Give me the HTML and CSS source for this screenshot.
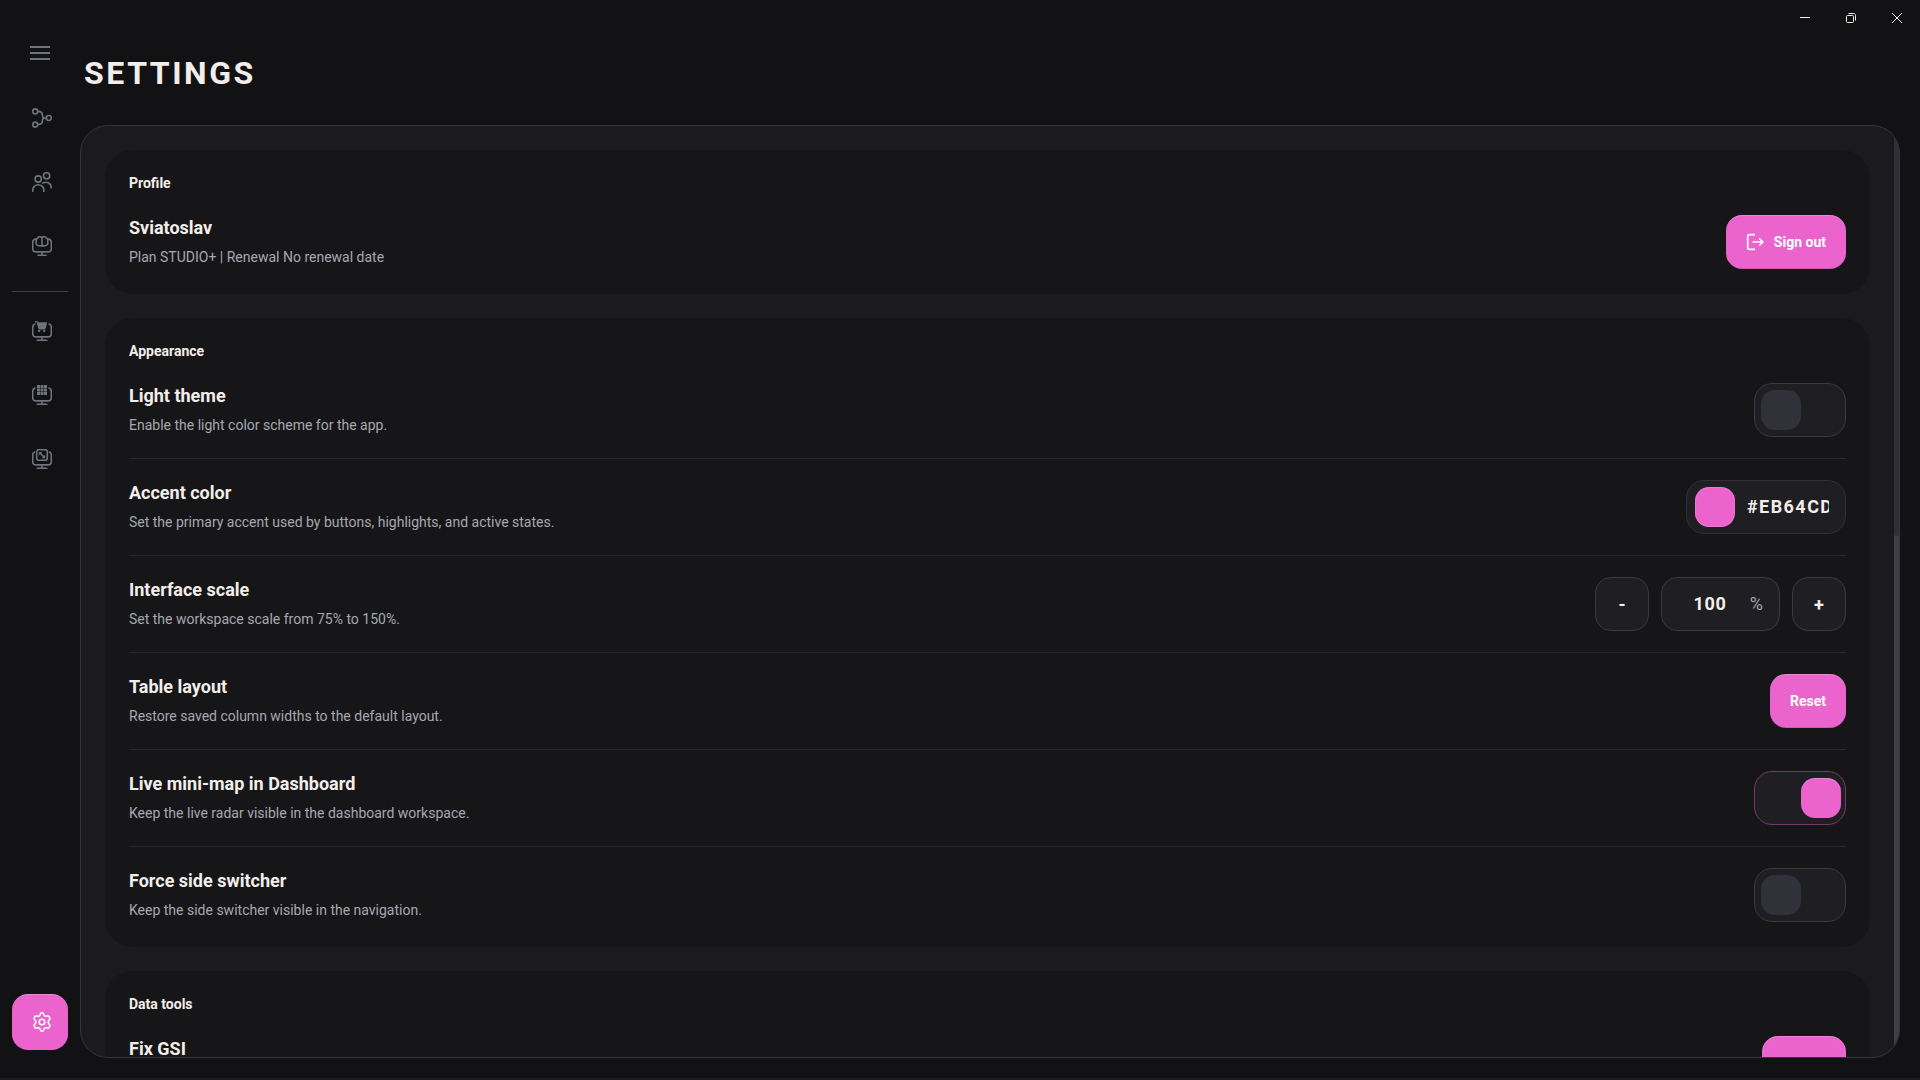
FILE: index.html
```
<!DOCTYPE html>
<html lang="en">
<head>
    <meta charset="UTF-8">
    <meta name="viewport" content="width=device-width, initial-scale=1.0">
    <title>Settings</title>
    <link rel="stylesheet" href="styles.css">
</head>
<body>
    <div class="app">
        <!-- Sidebar -->
        <nav class="sidebar" aria-label="Main">
            <button class="menu-button" type="button" aria-label="Menu">
                <svg width="20" height="14" viewBox="0 0 20 14" stroke="currentColor" stroke-width="2"><path d="M0 1h20M0 7h20M0 13h20"/></svg>
            </button>

            <button class="nav-button" type="button" aria-label="Draft">
                <svg class="icon" viewBox="0 0 20 20"><circle cx="3.2" cy="3.4" r="2.5"/><circle cx="3.2" cy="16.6" r="2.5"/><circle cx="16.8" cy="10" r="2.5"/><path d="M5.8 3.4c3 0 4.6 1.200 4.600 3.600 0 1.600.6 3 2.100 3h1.800M5.800 16.600c3 0 4.600-1.200 4.600-3.600 0-1.600.6-3 2.100-3"/></svg>
            </button>
            <button class="nav-button" type="button" aria-label="Players">
                <svg class="icon" viewBox="0 0 20 20"><circle cx="6.200" cy="7" r="3.100"/><circle cx="14.600" cy="3.800" r="3.100"/><path d="M.7 19.800v-1.500a5.600 5.600 0 0 1 11.200 0v1.500M10.600 11.200c3.500-2.300 8.700-.3 8.700 4.600"/></svg>
            </button>
            <button class="nav-button" type="button" aria-label="Analysis">
                <svg class="icon" viewBox="0 0 20 20"><path d="M3.800 3C1.700 3.300.7 4.600.7 6.500v6c0 2.300 1.200 3.400 3.400 3.400h11.800c2.200 0 3.400-1.100 3.400-3.400v-6c0-1.900-1-3.200-3.100-3.500M10 16v3.200M6 19.300h8M10 1.600C8.700.3 6.300.5 5.700 2 4.200 2.700 4 4 4.300 5.200c-.8 3.200 1 4.700 3.500 4.700h4.400c2.500 0 4.300-1.500 3.500-4.700.3-1.200.1-2.500-1.400-3.200C13.700.5 11.300.3 10 1.600zM10 1.600v8.200"/></svg>
            </button>

            <hr class="nav-divider">

            <button class="nav-button" type="button" aria-label="Shop overlay">
                <svg class="icon" viewBox="0 0 20 20"><path d="M3 3C1.500 3.400.7 4.600.7 6.500v6c0 2.300 1.200 3.400 3.400 3.400h11.800c2.200 0 3.400-1.100 3.400-3.400v-6c0-1.900-.6-3.100-2.100-3.500M10 16v3.200M5.200 19.300h9.600"/><path class="solid" d="M3 0h2.300l.6 1.300h9.300l-1.200 5.200c-.1.600-.5.900-1.100.9H7.100c-.6 0-1-.3-1.100-.9L4.600 1.200H3zM6.500 7.500h6.700v.9H6.500z"/><circle class="solid" cx="7.200" cy="9.900" r="1.200"/><circle class="solid" cx="12.200" cy="9.900" r="1.200"/></svg>
            </button>
            <button class="nav-button" type="button" aria-label="Grid overlay">
                <svg class="icon" viewBox="0 0 20 20"><path d="M3 3C1.500 3.400.7 4.600.7 6.500v6c0 2.300 1.200 3.400 3.400 3.400h11.800c2.200 0 3.400-1.100 3.400-3.400v-6c0-1.900-.8-3.100-2.300-3.500M10 16v3.200M5.200 19.300h9.600"/><path class="solid" d="M5 0h3v3H5zM8.500 0h3v3h-3zM12 0h3v3h-3zM5 3.500h3v3H5zM8.500 3.500h3v3h-3zM12 3.500h3v3h-3zM5 7h3v3H5zM8.500 7h3v3h-3zM12 7h3v3h-3z"/></svg>
            </button>
            <button class="nav-button" type="button" aria-label="Map overlay">
                <svg class="icon" viewBox="0 0 20 20"><path d="M2.600 3C1.300 3.400.7 4.600.7 6.500v6c0 2.300 1.200 3.400 3.400 3.400h11.800c2.200 0 3.400-1.100 3.400-3.400v-6c0-1.900-.6-3.100-1.900-3.500M10 16v3.200M5.200 19.300h9.600"/><rect x="4.700" y=".7" width="10.600" height="10.600" rx="2"/><path d="M8 4l4.200 4.200"/><path class="solid" d="M6.800 3h3.600L6.800 6.600zM13.200 9.300H9.600l3.600-3.600z"/></svg>
            </button>

            <button class="nav-button nav-button-active" type="button" aria-label="Settings" aria-current="page">
                <svg class="icon" viewBox="0 0 20 20"><circle cx="10" cy="10" r="2.800"/><path d="M8.300 2.300C8.600 1 9.200.8 10 .8s1.400.2 1.700 1.500c.3 1.500 1.700 2.300 3.100 1.800 1.300-.4 1.900-.1 2.300.6l.6 1.100c.4.700.3 1.300-.6 2.200-1.200 1.100-1.200 2.900 0 4 .9.900 1 1.500.6 2.200l-.6 1.100c-.4.700-1 1-2.300.6-1.400-.5-2.800.3-3.100 1.800-.3 1.300-.9 1.500-1.700 1.500s-1.400-.2-1.700-1.500c-.3-1.500-1.700-2.300-3.100-1.800-1.300.4-1.900.1-2.300-.6l-.6-1.100c-.4-.7-.3-1.300.6-2.200 1.200-1.100 1.200-2.900 0-4-.9-.9-1-1.500-.6-2.200l.6-1.100c.4-.7 1-1 2.300-.6 1.400.5 2.800-.3 3.100-1.800z"/></svg>
            </button>
        </nav>

        <main class="main">
            <!-- Window controls -->
            <div class="titlebar">
                <button class="window-button" type="button" aria-label="Minimize">
                    <svg width="10" height="10" viewBox="0 0 10 10"><path d="M0 4.500h10"/></svg>
                </button>
                <button class="window-button" type="button" aria-label="Restore">
                    <svg width="10" height="10" viewBox="0 0 10 10"><rect x=".5" y="2.500" width="7" height="7" rx="1"/><path d="M2.500 .5h5c1.300 0 2 .7 2 2v5"/></svg>
                </button>
                <button class="window-button" type="button" aria-label="Close">
                    <svg width="10" height="10" viewBox="0 0 10 10"><path d="M0 0l10 10M10 0L0 10"/></svg>
                </button>
            </div>

            <h1>SETTINGS</h1>

            <div class="panel">
                <div class="panel-content">
                    <section class="card">
                        <h2>Profile</h2>
                        <div class="row">
                            <div class="row-text">
                                <h3>Sviatoslav</h3>
                                <p>Plan STUDIO+ | Renewal No renewal date</p>
                            </div>
                            <button class="button" type="button">
                                <svg class="button-icon" viewBox="0 0 18 18"><path d="M9 1.700H3.200c-1 0-1.500.5-1.500 1.500v11.600c0 1 .5 1.500 1.500 1.500H9M6.500 9h10.300M13.300 5.500L16.800 9l-3.500 3.500"/></svg>
                                Sign out
                            </button>
                        </div>
                    </section>

                    <section class="card">
                        <h2>Appearance</h2>
                        <div class="row">
                            <div class="row-text">
                                <h3><label for="light-theme">Light theme</label></h3>
                                <p>Enable the light color scheme for the app.</p>
                            </div>
                            <input class="toggle" id="light-theme" type="checkbox">
                        </div>
                        <div class="row">
                            <div class="row-text">
                                <h3><label for="accent-color">Accent color</label></h3>
                                <p>Set the primary accent used by buttons, highlights, and active states.</p>
                            </div>
                            <div class="color-field">
                                <button class="swatch" type="button" aria-label="Pick accent color"></button>
                                <input id="accent-color" type="text" value="#EB64CD">
                            </div>
                        </div>
                        <div class="row">
                            <div class="row-text">
                                <h3><label for="scale">Interface scale</label></h3>
                                <p>Set the workspace scale from 75% to 150%.</p>
                            </div>
                            <div class="stepper">
                                <button class="step-button" type="button" aria-label="Decrease scale">-</button>
                                <div class="scale-field">
                                    <input id="scale" type="text" inputmode="numeric" value="100">
                                    <span>%</span>
                                </div>
                                <button class="step-button" type="button" aria-label="Increase scale">+</button>
                            </div>
                        </div>
                        <div class="row">
                            <div class="row-text">
                                <h3>Table layout</h3>
                                <p>Restore saved column widths to the default layout.</p>
                            </div>
                            <button class="button" type="button">Reset</button>
                        </div>
                        <div class="row">
                            <div class="row-text">
                                <h3><label for="mini-map">Live mini-map in Dashboard</label></h3>
                                <p>Keep the live radar visible in the dashboard workspace.</p>
                            </div>
                            <input class="toggle" id="mini-map" type="checkbox" checked>
                        </div>
                        <div class="row">
                            <div class="row-text">
                                <h3><label for="side-switcher">Force side switcher</label></h3>
                                <p>Keep the side switcher visible in the navigation.</p>
                            </div>
                            <input class="toggle" id="side-switcher" type="checkbox">
                        </div>
                    </section>

                    <section class="card">
                        <h2>Data tools</h2>
                        <div class="row">
                            <div class="row-text">
                                <h3>Fix GSI</h3>
                            </div>
                            <button class="button" type="button">Fix GSI</button>
                        </div>
                    </section>
                </div>
                <div class="scroll-track">
                    <div class="scroll-thumb"></div>
                </div>
            </div>
        </main>
    </div>
</body>
</html>
```
FILE: styles.css
```
* {
    box-sizing: border-box;
}

body {
    margin: 0;
    font-family: Roboto, "Liberation Sans", sans-serif;
    font-size: 14px;
    color: #f4eeea;
    background-color: #121214;
}

button,
input {
    font-family: inherit;
    color: inherit;
    margin: 0;
    padding: 0;
    border: none;
    outline: none;
}

button {
    cursor: pointer;
}

svg {
    display: block;
    fill: none;
}

.app {
    display: flex;
    height: 100vh;
    border-bottom: 2px solid #1d1d1f;
}

/* Sidebar */
.sidebar {
    display: flex;
    flex-direction: column;
    align-items: center;
    gap: 8px;
    width: 80px;
    padding: 36px 0 28px;
    color: #70737d;
}

.menu-button {
    display: grid;
    place-items: center;
    width: 56px;
    height: 34px;
    margin-bottom: 12px;
    background: none;
}

.nav-button {
    display: grid;
    place-items: center;
    width: 56px;
    height: 56px;
    padding-left: 4px;
    border-radius: 16px;
    background: none;
}

.nav-button-active {
    margin-top: auto;
    color: #fff;
    background-color: #eb64cd;
    box-shadow: inset 0 1px rgba(255, 255, 255, 0.2);
}

.icon {
    width: 20px;
    height: 20px;
    stroke: currentColor;
    stroke-width: 1.6;
    stroke-linecap: round;
    stroke-linejoin: round;
}

.solid {
    fill: currentColor;
    stroke: none;
}

.nav-divider {
    width: 56px;
    height: 1px;
    margin: 9px 0 3px;
    border: none;
    background-color: #404046;
}

/* Main area */
.main {
    display: flex;
    flex-direction: column;
    flex: 1;
    min-width: 0;
    padding: 0 0 20px;
}

.titlebar {
    display: flex;
    justify-content: flex-end;
}

.window-button {
    display: grid;
    place-items: center;
    width: 46px;
    height: 36px;
    background: none;
}

.window-button svg {
    stroke: #f4eeea;
    stroke-width: 1;
}

h1 {
    margin: 17px 0 32px 4px;
    font-size: 32px;
    line-height: 40px;
    font-weight: 700;
    letter-spacing: 0.08em;
}

.panel {
    display: flex;
    flex: 1;
    min-height: 0;
    margin-right: 20px;
    border: 1px solid #35353a;
    border-radius: 28px;
    background-color: #1b1a1f;
    overflow: hidden;
}

.panel-content {
    flex: 1;
    padding: 24px;
    overflow-y: auto;
    scrollbar-width: none;
}

.scroll-track {
    width: 5px;
    background-color: #403f48;
}

.scroll-thumb {
    height: 44%;
    border-radius: 0 0 3px 3px;
    background-color: #302f38;
}

/* Cards */
.card {
    padding: 24px;
    border-radius: 28px;
    background-color: #161618;
}

.card + .card {
    margin-top: 24px;
}

h2 {
    margin: 0 0 22px;
    font-size: 14px;
    line-height: 18px;
    font-weight: 700;
}

.row {
    display: flex;
    align-items: center;
    justify-content: space-between;
}

.row + .row {
    margin-top: 20px;
    padding-top: 20px;
    border-top: 1px solid #28282b;
}

.row-text {
    min-height: 56px;
}

h3 {
    margin: 0;
    font-size: 18px;
    line-height: 28px;
    font-weight: 700;
}

p {
    margin: 4px 0 0;
    line-height: 22px;
    color: #a6a8b0;
}

/* Controls */
.button {
    display: flex;
    align-items: center;
    gap: 10px;
    height: 54px;
    padding: 0 20px;
    border-radius: 16px;
    font-size: 14px;
    font-weight: 700;
    color: #fff;
    background-color: #eb64cd;
    box-shadow: inset 0 1px rgba(255, 255, 255, 0.2), inset 0 -1px rgba(0, 0, 0, 0.12);
}

.button-icon {
    width: 18px;
    height: 18px;
    stroke: currentColor;
    stroke-width: 1.7;
}

.toggle {
    appearance: none;
    width: 92px;
    height: 54px;
    padding: 6px;
    border: 1px solid #3a3a41;
    border-radius: 18px;
    background-color: #1f1e23;
    cursor: pointer;
}

.toggle::before {
    content: "";
    display: block;
    width: 40px;
    height: 40px;
    border-radius: 14px;
    background-color: #31313a;
}

.toggle:checked {
    border-color: #743a6a;
}

.toggle:checked::before {
    background-color: #eb64cd;
    box-shadow: inset 0 1px rgba(255, 255, 255, 0.2);
    transform: translateX(40px);
}

.color-field {
    display: flex;
    align-items: center;
    gap: 12px;
    width: 160px;
    height: 54px;
    padding: 0 16px 0 8px;
    border: 1px solid #303036;
    border-radius: 18px;
    background-color: #1f1e23;
}

.swatch {
    flex: none;
    width: 40px;
    height: 40px;
    border-radius: 14px;
    background-color: #eb64cd;
    box-shadow: inset 0 0 0 1px rgba(255, 255, 255, 0.12);
}

.color-field input,
.scale-field input {
    padding-bottom: 2px;
    font-size: 18px;
    font-weight: 700;
    background: none;
}

.color-field input {
    width: 82px;
    letter-spacing: 0.08em;
}

.stepper {
    display: flex;
    gap: 12px;
}

.step-button,
.scale-field {
    height: 54px;
    border: 1px solid #3a3a41;
    border-radius: 16px;
    background-color: #1f1e23;
    font-size: 18px;
}

.step-button {
    width: 54px;
    font-weight: 700;
}

.scale-field {
    display: flex;
    align-items: center;
    justify-content: space-between;
    width: 119px;
    padding: 0 16px;
    color: #a6a8b0;
}

.scale-field input {
    width: 64px;
    text-align: center;
    letter-spacing: 0.04em;
    color: #f4eeea;
}

.scale-field span {
    padding-bottom: 2px;
}
```
